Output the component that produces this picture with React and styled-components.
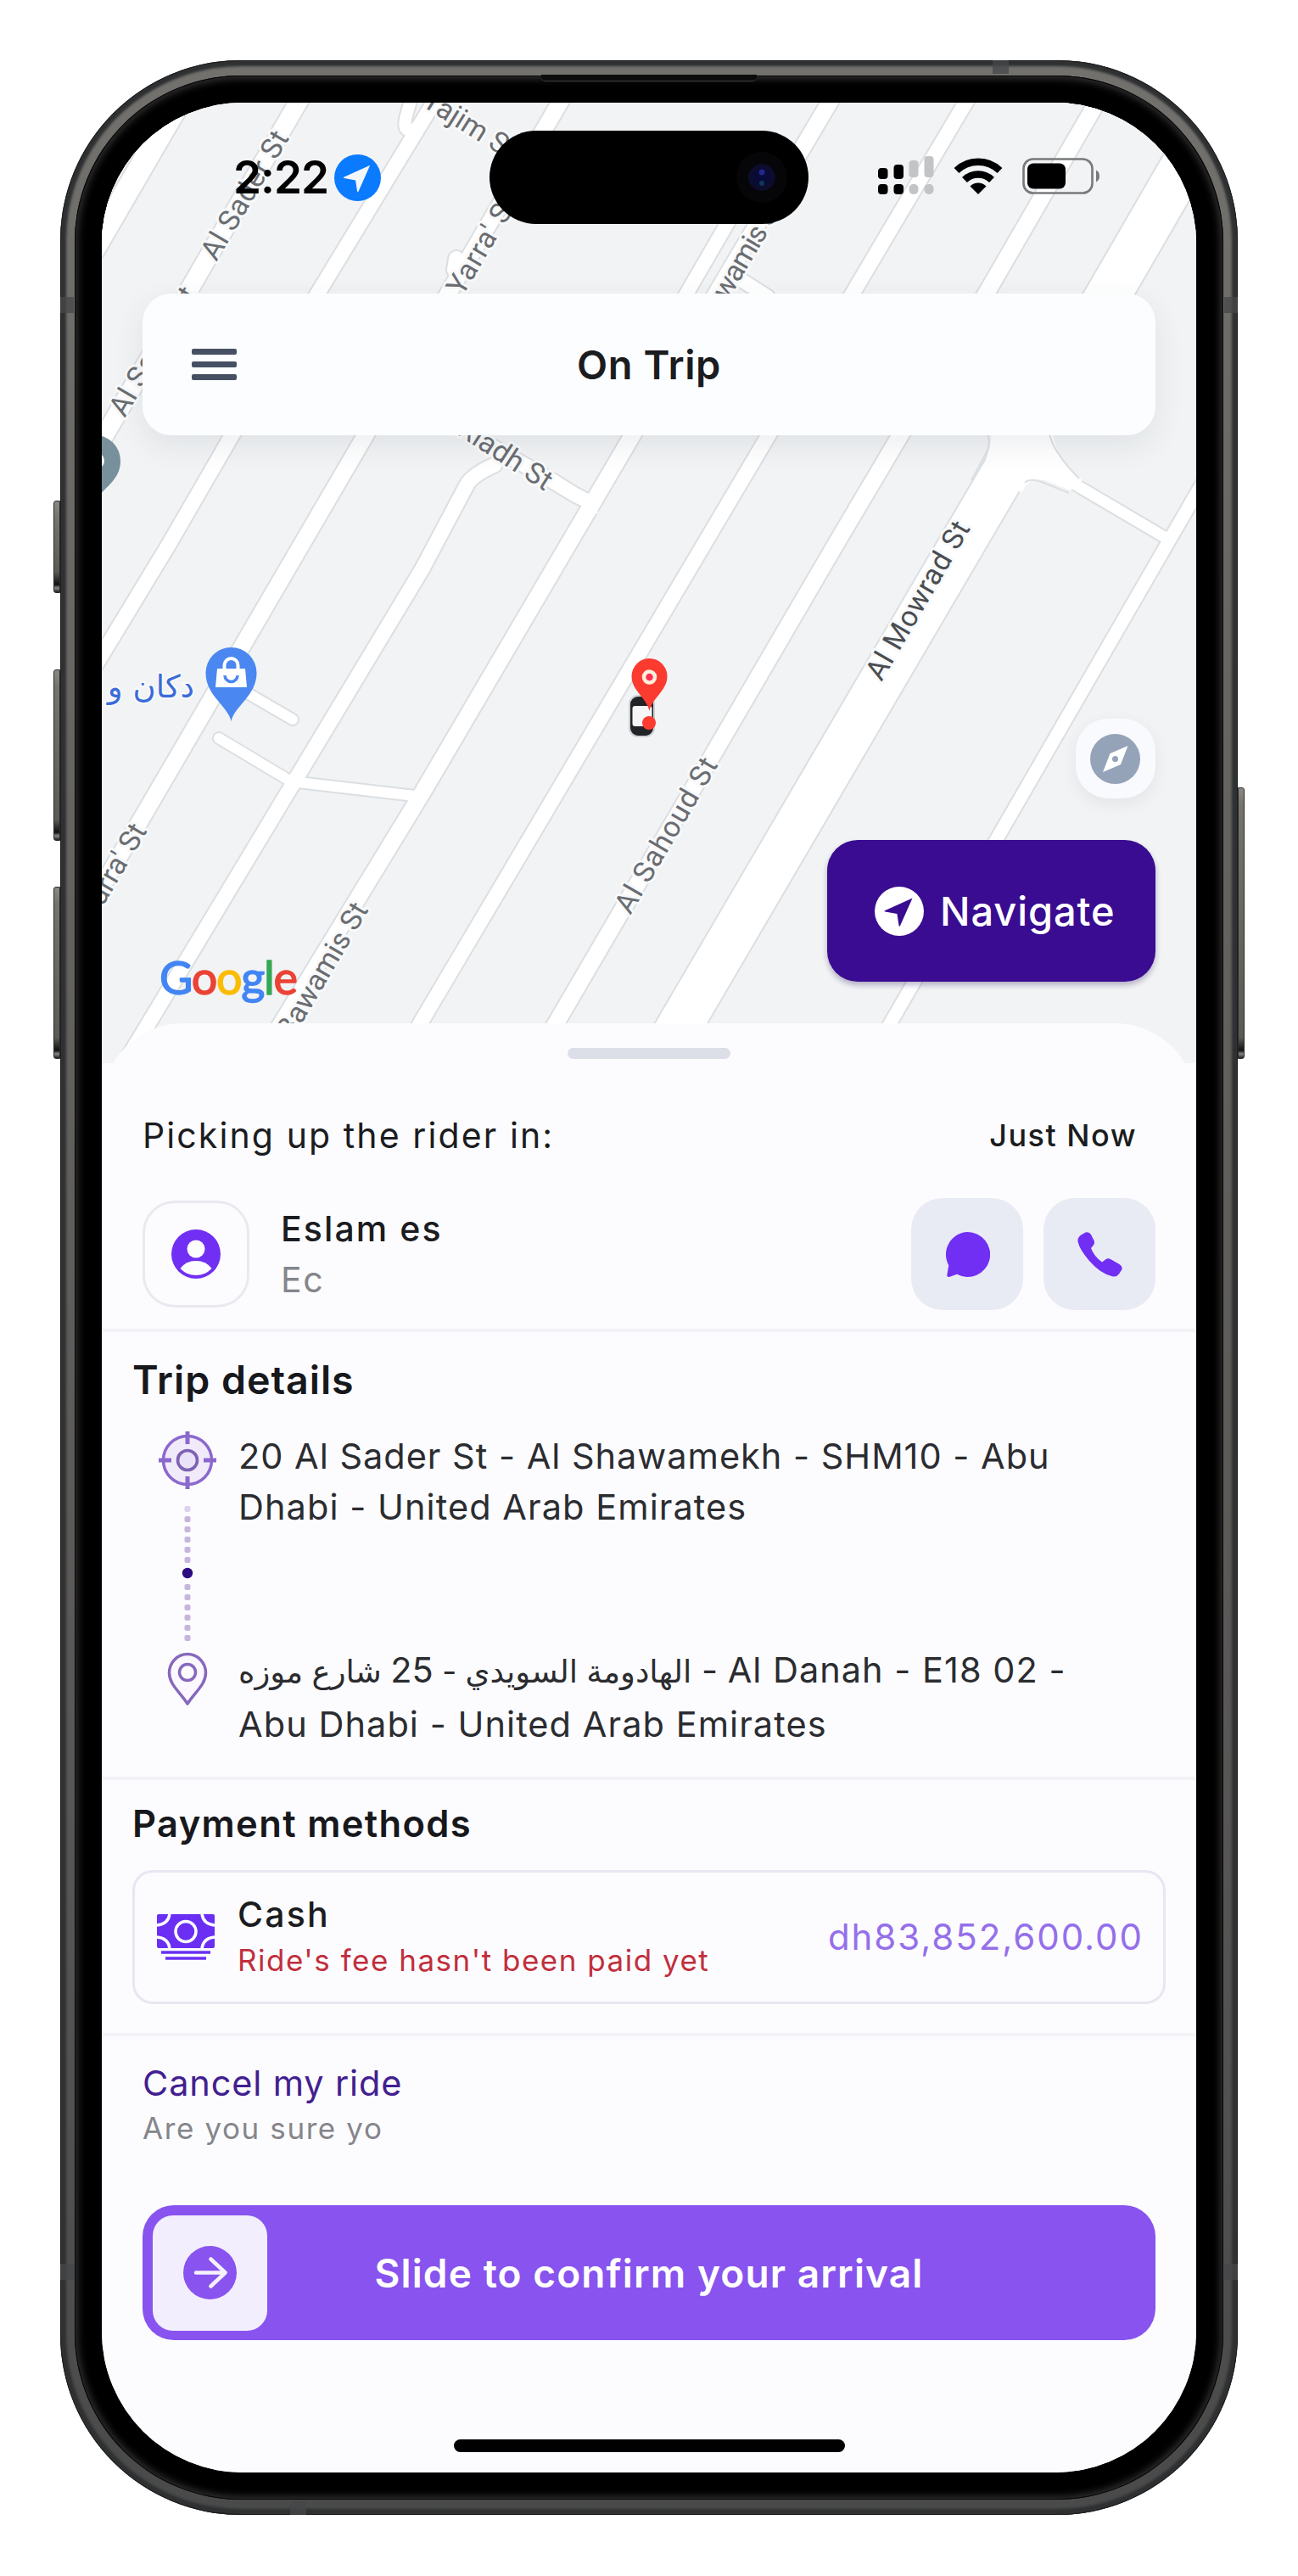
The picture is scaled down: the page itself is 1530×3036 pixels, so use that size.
import React from "react";
import styled, { createGlobalStyle } from "styled-components";

const Global = createGlobalStyle`
  * { box-sizing: border-box; }
  body { margin: 0; background: #fff; font-family: Inter, "Liberation Sans", sans-serif; }
`;

const Page = styled.main`
  width: 1530px;
  height: 3036px;
  padding: 71px 71px 0;
  background: #fff;
`;

/* ---------- device ---------- */
const Device = styled.div`
  position: relative;
  width: 1388px;
  height: 2893px;
  padding: 18px 17px;
  border-radius: 213px;
  background: linear-gradient(180deg, #73716d 0, #666461 30%, #585755 70%, #4a4a4a 100%);
  box-shadow: inset 0 0 0 1px #1d1e20, inset 0 0 3px 7px #2e3032;
`;
const Bezel = styled.div`
  height: 100%;
  padding: 32px;
  border-radius: 196px;
  background: #000;
  box-shadow: inset 0 0 0 1px #060606, inset 0 0 9px 4px #303030;
`;
const Screen = styled.div`
  height: 2793px;
  overflow: hidden;
  border-radius: 166px;
  background: #fcfcff;
`;
const SideKey = styled.span`
  position: absolute;
  ${(p) => (p.$right ? "right: -8px; border-radius: 0 3px 3px 0;" : "left: -8px; border-radius: 3px 0 0 3px;")}
  top: ${(p) => p.$top}px;
  width: 8px;
  height: ${(p) => p.$h}px;
  border: 1px solid #2c2b2a;
  background: linear-gradient(180deg, #8a8882 0, #75736d 20px, #5b5a56 calc(100% - 24px), #111 calc(100% - 9px), #888 calc(100% - 5px), #222 100%);
`;
const Band = styled.span`
  position: absolute;
  left: ${(p) => p.$x}px;
  top: ${(p) => p.$y}px;
  width: ${(p) => p.$w}px;
  height: ${(p) => p.$h}px;
  background: #45474a;
  opacity: 0.75;
`;
const Earpiece = styled.span`
  position: absolute;
  left: 567px;
  top: 17px;
  width: 254px;
  height: 8px;
  border-radius: 0 0 5px 5px;
  background: #0c0c0c;
  border-bottom: 1px solid #3c3c3c;
`;

/* ---------- map area ---------- */
const MapArea = styled.section`
  position: relative;
  height: 1132px;
  background: #f1f3f4;
`;
const MapCanvas = styled.svg`
  position: absolute;
  inset: 0;
  display: block;
`;
const MapOverlay = styled.div`
  position: relative;
  height: 100%;
  padding: 0 48px;
  display: flex;
  flex-direction: column;
`;
const StatusBar = styled.div`
  height: 225px;
  display: flex;
  align-items: flex-start;
  padding: 33px 65px 0 107px;
`;
const StatusSide = styled.div`
  height: 110px;
  display: flex;
  align-items: center;
  width: ${(p) => p.$w}px;
`;
const StatusIcons = styled.div`
  height: 106px;
  display: flex;
  align-items: center;
  margin-left: 82px;
  gap: 23px;
`;
const Island = styled.div`
  flex: none;
  width: 376px;
  height: 110px;
  border-radius: 55px;
  background: #000;
  display: flex;
  justify-content: flex-end;
  align-items: center;
  padding-right: 25px;
`;
const Clock = styled.span`
  font-size: 53px;
  line-height: 56px;
  font-weight: 600;
  letter-spacing: -1px;
  color: #000;
  width: 119px;
  white-space: nowrap;
`;
const HeaderCard = styled.header`
  height: 167px;
  border-radius: 34px;
  background: #fcfdff;
  box-shadow: 0 12px 36px rgba(60, 70, 90, 0.09);
  display: grid;
  grid-template-columns: 160px 1fr 160px;
  align-items: center;
`;
const Burger = styled.div`
  display: flex;
  flex-direction: column;
  gap: 8px;
  padding-left: 58px;
`;
const BurgerBar = styled.span`
  width: 53px;
  height: 7px;
  border-radius: 2px;
  background: #475063;
`;
const MapTools = styled.div`
  margin-top: 334px;
  display: flex;
  flex-direction: column;
  align-items: flex-end;
  gap: 49px;
`;
const CompassButton = styled.button`
  width: 94px;
  height: 94px;
  padding: 0 2px 0 0;
  border: 0;
  border-radius: 38px;
  background: #f9fafd;
  box-shadow: 0 6px 18px rgba(60, 70, 90, 0.08);
  display: grid;
  place-items: center;
`;
const NavigateButton = styled.button`
  width: 387px;
  height: 167px;
  border: 0;
  border-radius: 36px;
  background: #390c91;
  box-shadow: 0 4px 6px rgba(40, 20, 90, 0.3);
  display: flex;
  align-items: center;
  gap: 19px;
  padding: 0 0 0 56px;
  font-family: inherit;
`;

/* ---------- text ---------- */
const Txt = styled.span`
  display: block;
  white-space: nowrap;
  font-size: ${(p) => p.$size}px;
  line-height: ${(p) => p.$lh || 50}px;
  font-weight: ${(p) => p.$w || 400};
  letter-spacing: ${(p) => p.$ls || 0}px;
  color: ${(p) => p.$c || "#1b1c20"};
  text-align: ${(p) => p.$align || "left"};
`;
const Arabic = styled.span`
  font-family: Inter, "DejaVu Sans", sans-serif;
  letter-spacing: 0;
  font-size: 37px;
  line-height: 1;
`;
const Digits = styled.span`
  font-size: 41.5px;
`;

/* ---------- sheet ---------- */
const Sheet = styled.section`
  position: relative;
  margin-top: -47px;
  height: 1708px;
  border-radius: 96px 96px 0 0;
  background: #fcfcff;
  display: flex;
  flex-direction: column;
`;
const Grabber = styled.span`
  align-self: center;
  width: 192px;
  height: 13px;
  margin-top: 29px;
  border-radius: 7px;
  background: #dddfe8;
`;
const EtaRow = styled.div`
  display: flex;
  justify-content: space-between;
  margin-top: 65px;
  padding: 0 70px 0 48px;
`;
const RiderRow = styled.div`
  display: flex;
  align-items: center;
  height: 132px;
  margin-top: 49px;
  padding: 0 48px;
`;
const Avatar = styled.div`
  width: 126px;
  height: 126px;
  border: 3px solid #e9e9ef;
  border-radius: 38px;
  display: grid;
  place-items: center;
`;
const RiderText = styled.div`
  flex: 1;
  margin-left: 37px;
  display: flex;
  flex-direction: column;
  gap: 10px;
`;
const ActionButton = styled.button`
  width: 132px;
  height: 132px;
  padding: 0;
  margin-left: ${(p) => p.$ml || 0}px;
  border: 0;
  border-radius: 37px;
  background: #e9ebf4;
  display: grid;
  place-items: center;
`;
const Divider = styled.hr`
  width: 100%;
  height: 4px;
  margin: ${(p) => p.$mt}px 0 0;
  border: 0;
  background: #f3f3f7;
`;
const SectionTitle = styled.h2`
  margin: ${(p) => p.$mt}px 0 0 36px;
  font-size: ${(p) => p.$size}px;
  line-height: 56px;
  font-weight: 600;
  letter-spacing: ${(p) => p.$ls}px;
  color: #17181c;
  white-space: nowrap;
`;
const Route = styled.div`
  display: flex;
  margin-top: 32px;
  padding-left: 65px;
  height: 378px;
`;
const RouteRail = styled.div`
  width: 72px;
  display: flex;
  flex-direction: column;
  align-items: center;
  gap: 12px;
`;
const RouteEnd = styled.div`
  display: flex;
  flex-direction: column;
  align-items: center;
  gap: 3px;
`;
const RouteStops = styled.div`
  margin-left: 24px;
  display: flex;
  flex-direction: column;
  gap: 130px;
`;
const PayCard = styled.div`
  margin: 27px 36px 0;
  height: 158px;
  border: 3px solid #e8e6f1;
  border-radius: 24px;
  display: flex;
  align-items: center;
  padding: 0 23px 0 26px;
`;
const PayText = styled.div`
  flex: 1;
  margin-left: 27px;
  display: flex;
  flex-direction: column;
  gap: 4px;
`;
const CancelBlock = styled.div`
  margin: 30px 0 0 48px;
  display: flex;
  flex-direction: column;
  gap: 6px;
`;
const Slider = styled.div`
  margin: 69px 48px 0;
  height: 159px;
  border-radius: 37px;
  background: #8853ee;
  display: grid;
  grid-template-columns: 148px 1fr 148px;
  align-items: center;
`;
const SliderThumb = styled.div`
  width: 135px;
  height: 136px;
  margin-left: 12px;
  border-radius: 24px;
  background: #f3eefe;
  display: grid;
  place-items: center;
`;
const HomeIndicator = styled.span`
  align-self: center;
  width: 461px;
  height: 15px;
  margin-top: 117px;
  border-radius: 8px;
  background: #000;
`;

/* ---------- map data ---------- */
const roads = [
  { d: "M240 70 L80 345", w: 27 },
  { d: "M368 92 L96 560", w: 21 },
  { d: "M530 90 L375 345 L274 512 L200 640 L100 805", w: 17 },
  { d: "M682 83 L339 670 L110 1062", w: 19 },
  { d: "M500 60 L478 140 Q474 160 492 150", w: 14 },
  { d: "M700 592 Q690 592 655 569 L560 515 M583 548 Q556 560 550 572 L498 670 L347 921 L150 1248", w: 17 },
  { d: "M990 100 L746 512 L498 934 L310 1242", w: 19 },
  { d: "M800 362 L872 238 M866 325 L905 350", w: 16 },
  { d: "M1150 101 L496 1205 L470 1250", w: 17 },
  { d: "M1305 100 L1163 345 L1060 515 L986 640 L656 1205 L630 1250", w: 19 },
  { d: "M1425 556 L1050 1205 L1020 1258", w: 15 },
  { d: "M258 870 L343 921 L489 938", w: 12 },
  { d: "M290 816 L345 848", w: 12 },
  { d: "M1205 540 L1264 569 L1376 635", w: 13 },
  { d: "M538 305 L536 318", w: 18 },
  { d: "M1450 100 L1308 345 L1117 670 L770 1262", w: 52 },
  { d: "M1218 470 L1224 540", w: 18 },
];

const labels = [
  { t: "Al Sader St", x: 255, y: 309, r: -59.5, len: 170 },
  { t: "Al Sader St", x: 147, y: 493, r: -59.5, len: 170 },
  { t: "Yarra' St", x: 545, y: 350, r: -59.5, len: 130 },
  { t: "Tajim St", x: 496, y: 124, r: 32 },
  { t: "Riadh St", x: 642, y: 579, r: 33, end: true },
  { t: "Yarra' St", x: 174, y: 979, r: -59.5, end: true },
  { t: "Bawamis St", x: 435, y: 1072, r: -59.5, end: true },
  { t: "Bawamis St", x: 839, y: 387, r: -59.5, len: 168 },
  { t: "Al Sahoud St", x: 743, y: 1079, r: -59.7, len: 206 },
  { t: "Al Mowrad St", x: 1039, y: 804, r: -59.9, len: 210, dark: true },
];

function MapView() {
  return (
    <MapCanvas viewBox="120 121 1290 1132" width="1290" height="1132">
      <rect x="120" y="121" width="1290" height="1132" fill="#f1f3f4" />
      <g fill="none" strokeLinecap="round" strokeLinejoin="round">
        {roads.map((r, i) => (
          <path key={i} d={r.d} stroke="#dcdfe2" strokeWidth={r.w + 4} />
        ))}
        {roads.map((r, i) => (
          <path key={i} d={r.d} stroke="#fff" strokeWidth={r.w} />
        ))}
      </g>
      <path d="M1168 505 Q1172 525 1150 570 L1205 580 Q1212 562 1232 566 L1262 578 L1276 566 Q1244 542 1240 505Z" fill="#fff" />
      <path d="M1160 505 Q1170 520 1163 533 L1145 566 M1208 569 Q1214 563 1228 568 L1260 581 M1236 505 Q1238 530 1272 564" fill="none" stroke="#dcdfe2" strokeWidth="2" />
      <path d="M673 578 L690 590 Q684 604 678 612 L706 604Z" fill="#fff" />
      <g fontFamily="Roboto, sans-serif" fontSize="34" fontWeight="400" stroke="#f8f9fa" strokeWidth="6" paintOrder="stroke" strokeLinejoin="round">
        {labels.map((l, i) => (
          <text
            key={i}
            transform={`translate(${l.x} ${l.y}) rotate(${l.r})`}
            textAnchor={l.end ? "end" : "start"}
            textLength={l.len}
            fill={l.dark ? "#4a4d51" : "#6a6d71"}
          >
            {l.t}
          </text>
        ))}
      </g>
      {/* place pins */}
      <path d="M112 513a30 30 0 0 1 30 30c0 20-14 28-24 40l-6-4z" fill="#78909c" />
      <circle cx="113" cy="543" r="10" fill="#fff" />
      <path d="M272.500 850c-4-18-30-30-30-57a30 30 0 0 1 60 0c0 27-26 39-30 57z" fill="#4a87f0" />
      <path d="M256 788h33l2 22h-37z" fill="#fff" />
      <path d="M264.500 789v-5a8 8 0 0 1 16 0v5" fill="none" stroke="#fff" strokeWidth="4" />
      <path d="M265 796a7.500 7.500 0 0 0 15 0" fill="none" stroke="#4a87f0" strokeWidth="3.500" />
      <text x="229" y="822" textAnchor="start" direction="rtl" fontFamily="DejaVu Sans, sans-serif" fontSize="37" fill="#3a6bd8" stroke="#f8f9fa" strokeWidth="4" paintOrder="stroke">
        دكان و
      </text>
      {/* car and pickup pin */}
      <rect x="742" y="820" width="29" height="48" rx="10" fill="#222327" stroke="#cdd1d4" strokeWidth="2" />
      <rect x="745.500" y="832" width="23" height="24" rx="3" fill="#f6f6f7" />
      <path d="M765.500 838C762 822 744.500 814 744.500 797a21 21 0 0 1 42 0C786.500 814 769 822 765.500 838z" fill="#fb3b30" />
      <circle cx="765" cy="852" r="8" fill="#fb3b30" />
      <circle cx="765.500" cy="798" r="6.500" fill="#ff2f52" stroke="#fff0dc" strokeWidth="4.500" />
      <text x="188" y="1172" fontFamily="Lato, sans-serif" fontSize="54" textLength="163" strokeWidth="1.4" strokeLinejoin="round">
        <tspan fill="#4285f4" stroke="#4285f4">G</tspan>
        <tspan fill="#ea4335" stroke="#ea4335">o</tspan>
        <tspan fill="#fbbc05" stroke="#fbbc05">o</tspan>
        <tspan fill="#4285f4" stroke="#4285f4">g</tspan>
        <tspan fill="#34a853" stroke="#34a853">l</tspan>
        <tspan fill="#ea4335" stroke="#ea4335">e</tspan>
      </text>
    </MapCanvas>
  );
}

/* ---------- icons ---------- */
const LocationBadge = ({ size, bg, fg }) => (
  <svg width={size} height={size} viewBox="0 0 56 56">
    <circle cx="28" cy="28" r="28" fill={bg} />
    <path d="M43 13 L29 44.500 Q28 46 27.500 44 L25.500 31 L12 28.500 Q10 28 12 27Z" fill={fg} />
  </svg>
);
const Signal = () => (
  <svg width="66" height="46" viewBox="0 0 66 46">
    <g fill="#000">
      <rect x="0" y="14" width="11.500" height="13" rx="4" />
      <rect x="18.500" y="10" width="11.500" height="17" rx="4" />
      <rect x="0" y="33" width="11.500" height="12" rx="4" />
      <rect x="18.500" y="33" width="11.500" height="12" rx="4" />
    </g>
    <g fill="#c3c4c6">
      <rect x="36.500" y="5" width="11" height="20" rx="4" />
      <rect x="54.500" y="0" width="11" height="25" rx="4" />
      <rect x="36.500" y="33" width="11" height="12" rx="5" />
      <rect x="54.500" y="33" width="11" height="12" rx="5" />
    </g>
  </svg>
);
const Wifi = () => (
  <svg width="58" height="43" viewBox="0 0 58 43">
    <path d="M3.500 15a37 37 0 0 1 51 0" fill="none" stroke="#000" strokeWidth="8.500" />
    <path d="M13 26a23 23 0 0 1 32 0" fill="none" stroke="#000" strokeWidth="8.500" />
    <path d="M29 43 L19.500 33.500a13.500 13.500 0 0 1 19 0Z" fill="#000" />
  </svg>
);
const Battery = () => (
  <svg width="92" height="43" viewBox="0 0 92 43">
    <rect x="1.500" y="1.500" width="81" height="40" rx="11" fill="none" stroke="#77797c" strokeWidth="2.600" />
    <rect x="6" y="6.500" width="45" height="30" rx="7" fill="#000" />
    <path d="M87 14.500q4 2 4 7t-4 7z" fill="#77797c" />
  </svg>
);
const Camera = () => (
  <svg width="60" height="60" viewBox="0 0 60 60">
    <circle cx="30" cy="30" r="30" fill="#060507" />
    <circle cx="30" cy="30" r="16" fill="#0c0c2c" />
    <circle cx="30" cy="30" r="10" fill="#080a38" />
    <circle cx="30" cy="24" r="3.500" fill="#23268a" />
    <circle cx="30" cy="37" r="3" fill="#0d3a50" />
  </svg>
);
const Compass = () => (
  <svg width="59" height="59" viewBox="0 0 59 59">
    <circle cx="29.500" cy="29.500" r="29.500" fill="#94a3b8" />
    <path d="M44.500 14 L36 36 L15 45 L23.500 23Z" fill="#fff" />
    <circle cx="29.500" cy="29.500" r="3.500" fill="#94a3b8" />
  </svg>
);
const Person = () => (
  <svg width="58" height="58" viewBox="0 0 58 58">
    <circle cx="29" cy="29" r="29" fill="#702ff2" />
    <circle cx="29" cy="23" r="10.500" fill="#fcfcff" />
    <path d="M10.500 46 Q17 37 29 37 T47.500 46 Q40 54 29 54 T10.500 46Z" fill="#fcfcff" />
  </svg>
);
const Chat = () => (
  <svg width="53" height="53" viewBox="0 0 20 20">
    <path d="M10 0a10 10 0 1 1-4.700 18.800L1.900 20a.8.8 0 0 1-1-1l.7-4.200A10 10 0 0 1 10 0z" fill="#702ff2" />
  </svg>
);
const Phone = () => (
  <svg width="53" height="53" viewBox="0 0 53 53">
    <path d="M6 2.500 L9.500 .6 Q13.500 -1 16 3 L19.500 10 Q21 13.500 18.500 16 L16 19 Q19 28 29 35.500 L33 32.500 Q36 30.500 39 32 L49.500 38 Q53.500 40.500 52.500 44 L49 49.500 Q46 53.500 41 52.300 Q27 49 14 34 Q2 20 .5 11 Q0 5.500 6 2.500Z" fill="#702ff2" />
  </svg>
);
const Origin = () => (
  <svg width="70" height="70" viewBox="0 0 70 70">
    <circle cx="35" cy="35" r="28.500" fill="#f0eafb" stroke="#8b68cc" strokeWidth="3.500" />
    <circle cx="35" cy="35" r="11.500" fill="#eae2f9" stroke="#7d62b4" strokeWidth="3.600" />
    <path d="M35 1v15M35 54v15M1 35h15M54 35h15" stroke="#8b68cc" strokeWidth="5" />
  </svg>
);
const Dots = () => (
  <svg width="14" height="176" viewBox="0 0 14 176">
    {[10, 22, 34, 46, 58, 70, 102, 114, 126, 138, 150, 162].map((y, i) => (
      <rect key={y} x="3.500" y={y - 3} width="7" height="7" rx="2" fill="#bda8d8" opacity={i === 0 ? 0.5 : 0.85} />
    ))}
    <circle cx="7" cy="86" r="6.200" fill="#2c0a80" />
  </svg>
);
const Pin = () => (
  <svg width="48" height="64" viewBox="0 0 48 64">
    <path d="M24 61 C14 46 2.500 38 2.500 24.500 a21.500 22 0 0 1 43 0 C45.500 38 34 46 24 61Z" fill="#fbf8ff" stroke="#8768bd" strokeWidth="3.500" strokeLinejoin="round" />
    <circle cx="24" cy="24" r="9.500" fill="#fcfcff" stroke="#8768bd" strokeWidth="3.500" />
  </svg>
);
const Cash = () => (
  <svg width="68" height="54" viewBox="0 0 68 54">
    <rect width="68" height="40" rx="2" fill="#6a2ff2" />
    <g fill="none" stroke="#fcfcff" strokeWidth="3.500">
      <path d="M15 -1 Q14 12 -1 13 M53 -1 Q54 12 69 13 M15 41 Q14 28 -1 27 M53 41 Q54 28 69 27" />
      <circle cx="34" cy="20.500" r="12" />
    </g>
    <path d="M5 45h58M10 52h48" stroke="#6a2ff2" strokeWidth="3.600" />
  </svg>
);
const Arrow = () => (
  <svg width="63" height="63" viewBox="0 0 63 63">
    <circle cx="31.500" cy="31.500" r="31.500" fill="#8853ee" />
    <path d="M15 31.500h34M32.500 15.500l17 16-17 16" fill="none" stroke="#f6f1ff" strokeWidth="4.600" strokeLinecap="round" strokeLinejoin="round" />
  </svg>
);

export default function App() {
  return (
    <>
      <Global />
      <Page>
        <Device>
          <SideKey $top={519} $h={109} />
          <SideKey $top={718} $h={202} />
          <SideKey $top={974} $h={203} />
          <SideKey $right $top={857} $h={320} />
          <Band $x={0} $y={279} $w={16} $h={19} />
          <Band $x={1372} $y={279} $w={16} $h={19} />
          <Band $x={0} $y={2597} $w={16} $h={19} />
          <Band $x={1372} $y={2597} $w={16} $h={19} />
          <Band $x={1099} $y={0} $w={19} $h={16} />
          <Band $x={271} $y={2877} $w={19} $h={16} />
          <Earpiece />
          <Bezel>
            <Screen>
              <MapArea>
                <MapView />
                <MapOverlay>
                  <StatusBar>
                    <StatusSide $w={302}>
                      <Clock>2:22</Clock>
                      <LocationBadge size={55} bg="#0a7aff" fg="#f3f6fb" />
                    </StatusSide>
                    <Island><Camera /></Island>
                    <StatusIcons><Signal /><Wifi /><Battery /></StatusIcons>
                  </StatusBar>
                  <HeaderCard>
                    <Burger><BurgerBar /><BurgerBar /><BurgerBar /></Burger>
                    <Txt $size={47} $lh={60} $w={600} $ls={0.6} $align="center">On Trip</Txt>
                  </HeaderCard>
                  <MapTools>
                    <CompassButton><Compass /></CompassButton>
                    <NavigateButton>
                      <LocationBadge size={58} bg="#fff" fg="#390c91" />
                      <Txt $size={47} $w={500} $ls={0.9} $c="#fff">Navigate</Txt>
                    </NavigateButton>
                  </MapTools>
                </MapOverlay>
              </MapArea>
              <Sheet>
                <Grabber />
                <EtaRow>
                  <Txt $size={41} $ls={2.1}>Picking up the rider in:</Txt>
                  <Txt $size={36} $w={500} $ls={1.5}>Just Now</Txt>
                </EtaRow>
                <RiderRow>
                  <Avatar><Person /></Avatar>
                  <RiderText>
                    <Txt $size={41} $w={500} $ls={2.1}>Eslam es</Txt>
                    <Txt $size={41} $ls={1.6} $c="#85868b">Ec</Txt>
                  </RiderText>
                  <ActionButton><Chat /></ActionButton>
                  <ActionButton $ml={24}><Phone /></ActionButton>
                </RiderRow>
                <Divider $mt={22} />
                <SectionTitle $mt={28} $size={46.5} $ls={1}>Trip details</SectionTitle>
                <Route>
                  <RouteRail>
                    <Origin />
                    <RouteEnd><Dots /><Pin /></RouteEnd>
                  </RouteRail>
                  <RouteStops>
                    <div>
                      <Txt $size={41.500} $lh={60} $ls={0.98} $c="#2b2c30">20 Al Sader St - Al Shawamekh - SHM10 - Abu</Txt>
                      <Txt $size={41.500} $lh={60} $ls={1.05} $c="#2b2c30">Dhabi - United Arab Emirates</Txt>
                    </div>
                    <div>
                      <Txt $size={41.500} $lh={64} $ls={1} $c="#2b2c30"><Arabic>الهادومة السويدي - <Digits>25</Digits> شارع موزه</Arabic> - Al Danah - E18 02 -</Txt>
                      <Txt $size={41.500} $lh={64} $ls={1.05} $c="#2b2c30">Abu Dhabi - United Arab Emirates</Txt>
                    </div>
                  </RouteStops>
                </Route>
                <Divider $mt={30} />
                <SectionTitle $mt={23} $size={43.5} $ls={1.35}>Payment methods</SectionTitle>
                <PayCard>
                  <Cash />
                  <PayText>
                    <Txt $size={41} $w={500} $ls={2.2}>Cash</Txt>
                    <Txt $size={35} $ls={1.5} $c="#c12f3c">Ride's fee hasn't been paid yet</Txt>
                  </PayText>
                  <Txt $size={42} $ls={1.95} $c="#956fea">dh83,852,600.00</Txt>
                </PayCard>
                <Divider $mt={34} />
                <CancelBlock>
                  <Txt $size={41.500} $ls={0.85} $c="#42208f">Cancel my ride</Txt>
                  <Txt $size={35} $lh={44} $ls={1.6} $c="#85868b">Are you sure yo</Txt>
                </CancelBlock>
                <Slider>
                  <SliderThumb><Arrow /></SliderThumb>
                  <Txt $size={46} $w={600} $ls={1.1} $c="#fff" $align="center">Slide to confirm your arrival</Txt>
                </Slider>
                <HomeIndicator />
              </Sheet>
            </Screen>
          </Bezel>
        </Device>
      </Page>
    </>
  );
}
